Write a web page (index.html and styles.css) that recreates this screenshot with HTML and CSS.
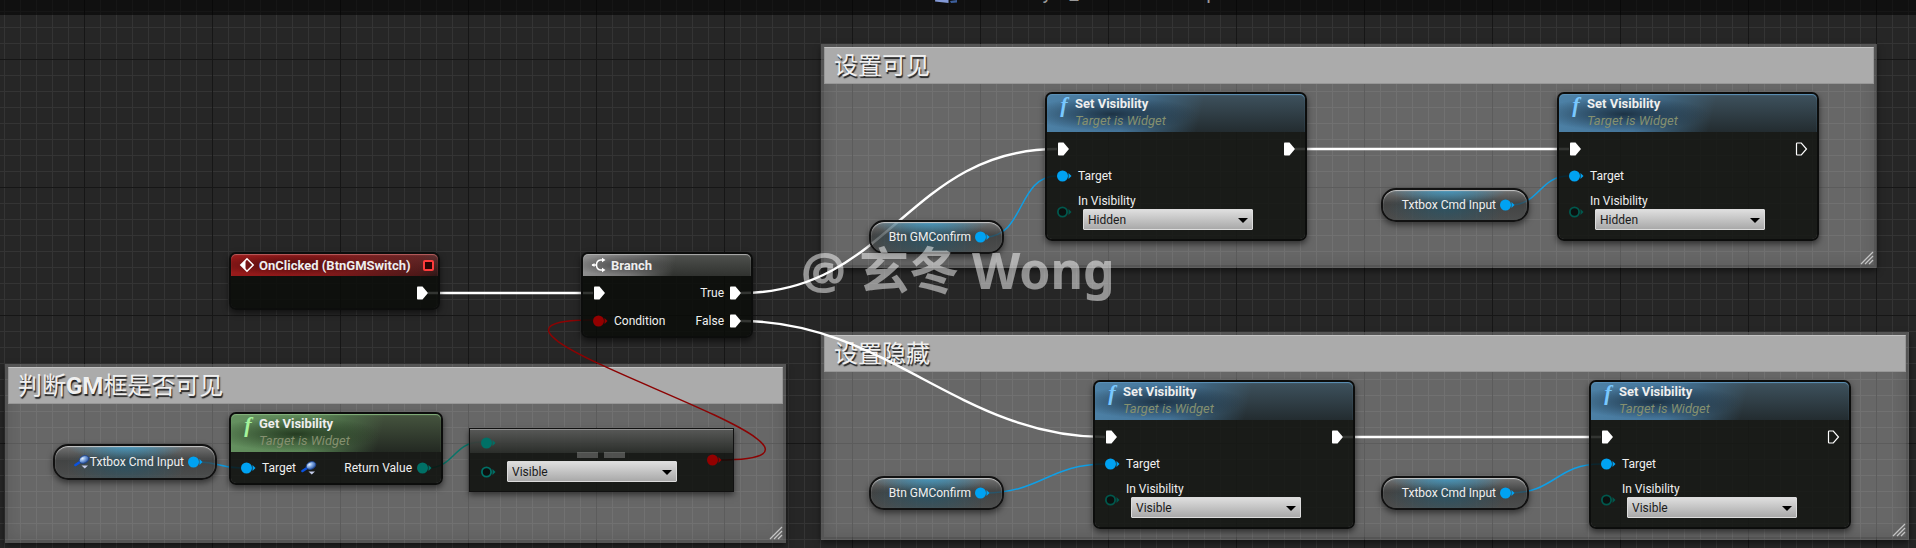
FILE: index.html
```html
<!DOCTYPE html>
<html lang="zh-CN">
<head>
<meta charset="utf-8">
<title>Event Graph</title>
<link rel="stylesheet" href="styles.css">
</head>
<body>
<svg class="defs" aria-hidden="true">
  <defs>
    <symbol id="exec" viewBox="0 0 14 16"><path d="M1 2.2Q1 1.5 1.8 1.5H6.5L12 8L6.500 14.500H1.800Q1 14.500 1 13.800Z" fill="#fff"/></symbol>
    <symbol id="exec-open" viewBox="0 0 14 16"><path d="M1.500 2.700Q1.500 2 2.200 2H6.300L11.500 8L6.300 14H2.200Q1.500 14 1.500 13.300Z" fill="none" stroke="#fff" stroke-width="1.200"/></symbol>
    <symbol id="pin" viewBox="0 0 16 12"><circle cx="5.500" cy="6" r="5.500" fill="currentColor"/><path d="M11.500 3L14.500 6L11.500 9Z" fill="currentColor"/></symbol>
    <symbol id="pin-open" viewBox="0 0 16 12"><circle cx="5.500" cy="6" r="4.600" fill="#0b100f" stroke="currentColor" stroke-width="1.800"/><path d="M11.500 3L14.500 6L11.500 9Z" fill="currentColor"/></symbol>
    <radialGradient id="lens" cx=".4" cy=".3" r=".8"><stop offset="0" stop-color="#e4f0ff"/><stop offset=".4" stop-color="#7ea6e0"/><stop offset="1" stop-color="#173f8c"/></radialGradient>
    <symbol id="search" viewBox="0 0 16 16"><path d="M1.500 11L6 8" stroke="#0a52e0" stroke-width="2.600" stroke-linecap="round"/><ellipse cx="10" cy="5.500" rx="5" ry="3.600" transform="rotate(-25 10 5.500)" fill="url(#lens)" stroke="#1c4391" stroke-width=".8"/><path d="M7.500 11.500H14L10.750 14.500Z" fill="#c3cbe8"/></symbol>
    <symbol id="grip" viewBox="0 0 14 14"><path d="M1 13L13 1M5 13L13 5M9 13L13 9" stroke="#c4c4c4" stroke-width="1.300"/></symbol>
  </defs>
</svg>

<main class="canvas">
  <header class="topbar">
    <svg class="crumb-icon" viewBox="0 0 24 12"><path d="M1 0H13.500V9L0 7.500Z" fill="#8399d6"/><path d="M15 7L22 6V8.500L16 9Z" fill="#3d5f9c"/></svg>
    <span class="crumb">MyM_G</span><span class="crumb crumb-sep">&gt;</span><span class="crumb">EventGraph</span>
  </header>

  <section class="comment comment-show">
    <h2 class="comment-title"><span>设置可见</span></h2>
    <svg class="grip"><use href="#grip"/></svg>
  </section>
  <section class="comment comment-hide">
    <h2 class="comment-title"><span>设置隐藏</span></h2>
    <svg class="grip"><use href="#grip"/></svg>
  </section>
  <section class="comment comment-check">
    <h2 class="comment-title"><span>判断<b>GM</b>框是否可见</span></h2>
    <svg class="grip"><use href="#grip"/></svg>
  </section>

  <svg class="wires" aria-hidden="true">
    <g class="wire-exec">
      <path d="M428 293H593"/>
      <path d="M741 293C889 293 909 149 1057 149"/>
      <path d="M741 321C886 321 960 437 1105 437"/>
      <path d="M1295 149H1569"/>
      <path d="M1343 437H1601"/>
    </g>
    <g class="wire-object">
      <path d="M985 237C1025 237 1017 176 1057 176"/>
      <path d="M985 493C1040 493 1050 464 1105 464"/>
      <path d="M1510 205C1540 205 1539 176 1569 176"/>
      <path d="M1510 493C1555 493 1556 464 1601 464"/>
      <path d="M198 462C220 462 219 468 241 468"/>
    </g>
    <path class="wire-enum" d="M427 468C455 468 453 442 481 442"/>
    <path class="wire-bool" d="M718 460C920 460 398 320 593 320"/>
  </svg>

  <article class="node node-clicked">
    <header class="node-head head-red">
      <svg class="icon" viewBox="0 0 16 16"><path d="M8 1.800L1.800 8L8 14.200L14.200 8Z" fill="none" stroke="#fff" stroke-width="1.500"/><path d="M6.500 3.500V12.500L2 8Z" fill="#fff"/></svg>
      <h3>OnClicked (BtnGMSwitch)</h3>
      <span class="delegate"></span>
    </header>
    <div class="node-body">
      <div class="row row-end"><svg class="exec"><use href="#exec"/></svg></div>
    </div>
  </article>

  <article class="node node-branch">
    <header class="node-head head-gray">
      <svg class="icon" viewBox="0 0 16 16"><path d="M1 8H5M12 3H9.500Q5.500 3.500 5.500 8Q5.500 12.500 9.500 13H12" fill="none" stroke="#fff" stroke-width="1.500"/><path d="M11 .8L14.500 3L11 5.200ZM11 10.800L14.500 13L11 15.200ZM3.500 6V10L.5 8Z" fill="#fff"/></svg>
      <h3>Branch</h3>
    </header>
    <div class="node-body">
      <div class="row"><svg class="exec"><use href="#exec"/></svg><span class="push">True</span><svg class="exec"><use href="#exec"/></svg></div>
      <div class="row"><svg class="pin c-bool"><use href="#pin"/></svg><span>Condition</span><span class="push">False</span><svg class="exec"><use href="#exec"/></svg></div>
    </div>
  </article>

  <article class="node node-get">
    <header class="node-head head-green tall">
      <i class="fn" aria-hidden="true">f</i>
      <div><h3>Get Visibility</h3><p>Target is Widget</p></div>
    </header>
    <div class="node-body">
      <div class="row"><svg class="pin c-object"><use href="#pin"/></svg><span>Target</span><svg class="icon"><use href="#search"/></svg><span class="push">Return Value</span><svg class="pin c-enum"><use href="#pin"/></svg></div>
    </div>
  </article>

  <article class="node-equal">
    <div class="equal-in">
      <svg class="pin c-enum"><use href="#pin"/></svg>
      <svg class="pin c-enum"><use href="#pin-open"/></svg>
      <span class="pick"><select aria-label="Compare value"><option>Visible</option></select></span>
    </div>
    <svg class="equal-sign" viewBox="0 0 48 6"><path d="M0 0H21V6H0ZM27 0H48V6H27Z" fill="#fff" fill-opacity=".24"/></svg>
    <svg class="pin c-bool"><use href="#pin"/></svg>
  </article>

  <article class="node node-set set-a">
    <header class="node-head head-blue tall"><i class="fn" aria-hidden="true">f</i><div><h3>Set Visibility</h3><p>Target is Widget</p></div></header>
    <div class="node-body">
      <div class="row"><svg class="exec"><use href="#exec"/></svg><svg class="exec push"><use href="#exec"/></svg></div>
      <div class="row"><svg class="pin c-object"><use href="#pin"/></svg><span>Target</span></div>
      <div class="param"><svg class="pin c-enum dim"><use href="#pin-open"/></svg><label for="vis-a">In Visibility</label><span class="pick"><select id="vis-a"><option>Hidden</option><option>Visible</option></select></span></div>
    </div>
  </article>
  <article class="node node-set set-b">
    <header class="node-head head-blue tall"><i class="fn" aria-hidden="true">f</i><div><h3>Set Visibility</h3><p>Target is Widget</p></div></header>
    <div class="node-body">
      <div class="row"><svg class="exec"><use href="#exec"/></svg><svg class="exec push"><use href="#exec-open"/></svg></div>
      <div class="row"><svg class="pin c-object"><use href="#pin"/></svg><span>Target</span></div>
      <div class="param"><svg class="pin c-enum dim"><use href="#pin-open"/></svg><label for="vis-b">In Visibility</label><span class="pick"><select id="vis-b"><option>Hidden</option><option>Visible</option></select></span></div>
    </div>
  </article>
  <article class="node node-set set-c">
    <header class="node-head head-blue tall"><i class="fn" aria-hidden="true">f</i><div><h3>Set Visibility</h3><p>Target is Widget</p></div></header>
    <div class="node-body">
      <div class="row"><svg class="exec"><use href="#exec"/></svg><svg class="exec push"><use href="#exec"/></svg></div>
      <div class="row"><svg class="pin c-object"><use href="#pin"/></svg><span>Target</span></div>
      <div class="param"><svg class="pin c-enum dim"><use href="#pin-open"/></svg><label for="vis-c">In Visibility</label><span class="pick"><select id="vis-c"><option>Visible</option><option>Hidden</option></select></span></div>
    </div>
  </article>
  <article class="node node-set set-d">
    <header class="node-head head-blue tall"><i class="fn" aria-hidden="true">f</i><div><h3>Set Visibility</h3><p>Target is Widget</p></div></header>
    <div class="node-body">
      <div class="row"><svg class="exec"><use href="#exec"/></svg><svg class="exec push"><use href="#exec-open"/></svg></div>
      <div class="row"><svg class="pin c-object"><use href="#pin"/></svg><span>Target</span></div>
      <div class="param"><svg class="pin c-enum dim"><use href="#pin-open"/></svg><label for="vis-d">In Visibility</label><span class="pick"><select id="vis-d"><option>Visible</option><option>Hidden</option></select></span></div>
    </div>
  </article>

  <div class="pill pill-btn-top"><span>Btn GMConfirm</span><svg class="pin c-object"><use href="#pin"/></svg></div>
  <div class="pill pill-btn-low"><span>Btn GMConfirm</span><svg class="pin c-object"><use href="#pin"/></svg></div>
  <div class="pill pill-txt-top"><span>Txtbox Cmd Input</span><svg class="pin c-object"><use href="#pin"/></svg></div>
  <div class="pill pill-txt-low"><span>Txtbox Cmd Input</span><svg class="pin c-object"><use href="#pin"/></svg></div>
  <div class="pill pill-txt-left"><svg class="icon"><use href="#search"/></svg><span>Txtbox Cmd Input</span><svg class="pin c-object"><use href="#pin"/></svg></div>

  <div class="watermark">@ 玄冬 Wong</div>
</main>
</body>
</html>
```
FILE: styles.css
```css
* { box-sizing: border-box; }

body {
  margin: 0;
  font: 12px/16px Roboto, "Noto Sans CJK SC", sans-serif;
  color: #f0f0f0;
  background: #262626;
}

h2, h3, p { margin: 0; }
svg { display: block; flex: none; overflow: visible; }
.defs { position: absolute; width: 0; height: 0; }

/* graph surface: 16px cells, a darker line every 8 cells */
.canvas {
  position: relative;
  min-height: 100vh;
  overflow: hidden;
  background-color: #262626;
  background-image:
    linear-gradient(90deg, #161616 1px, transparent 1px),
    linear-gradient(#161616 1px, transparent 1px),
    linear-gradient(90deg, #343434 1px, transparent 1px),
    linear-gradient(#343434 1px, transparent 1px);
  background-size: 128px 128px, 128px 128px, 16px 16px, 16px 16px;
  background-position: 84px 59px, 84px 59px, 4px 11px, 4px 11px;
}

.topbar {
  display: flex;
  gap: 12px;
  height: 15px;
  padding-left: 935px;
  overflow: hidden;
  background: rgba(0, 0, 0, .56);
}
.crumb-icon { width: 24px; height: 12px; margin: -6px 54px 0 0; }
.crumb { margin-top: -18px; font-size: 20px; line-height: 20px; color: #999; }
.crumb-sep { color: #fff; }

/* comment boxes */
.comment {
  position: absolute;
  border: 3px solid rgba(255, 255, 255, .22);
  background: rgba(255, 255, 255, .3);
  background-clip: padding-box;
  box-shadow: 0 3px 6px rgba(0, 0, 0, .5), inset 0 0 16px rgba(0, 0, 0, .12);
}
.comment-show { left: 821px; top: 44px; width: 1056px; height: 224px; }
.comment-hide { left: 821px; top: 332px; width: 1088px; height: 208px; }
.comment-check { left: 5px; top: 364px; width: 781px; height: 179px; }
.comment-title {
  height: 37px;
  padding-left: 9px;
  border: 1px solid #979797;
  border-top-color: #c4c4c4;
  font-size: 24px;
  line-height: 37px;
  font-weight: 400;
  color: #f0f0f0;
  background: #ababab;
  text-shadow: 1px 2px 1px #222;
}
.grip { position: absolute; right: 0; bottom: 0; width: 14px; height: 14px; }

.wires { position: absolute; inset: 0; width: 100%; height: 100%; fill: none; }
.wire-exec { stroke: #fff; stroke-width: 2.4; }
.wire-object { stroke: #0f9fe6; stroke-width: 1.5; }
.wire-enum { stroke: #087468; stroke-width: 1.5; }
.wire-bool { stroke: #8c0303; stroke-width: 1.5; }

/* nodes */
.node {
  position: absolute;
  border: 2px solid #0c0d0c;
  border-radius: 7px;
  background: rgba(10, 12, 9, .83);
  background-clip: padding-box;
  box-shadow: 0 3px 6px rgba(0, 0, 0, .55);
}
.node-clicked { left: 229px; top: 252px; width: 211px; }
.node-branch { left: 581px; top: 252px; width: 172px; }
.node-get { left: 229px; top: 412px; width: 214px; }
.node-set { width: 262px; }
.set-a { left: 1045px; top: 92px; }
.set-b { left: 1557px; top: 92px; }
.set-c { left: 1093px; top: 380px; }
.set-d { left: 1589px; top: 380px; }

.node-head {
  display: flex;
  align-items: center;
  gap: 4px;
  height: 22px;
  padding: 0 4px 0 8px;
  border-radius: 5px 5px 0 0;
}
.node-head.tall { align-items: flex-start; height: 38px; padding: 1px 10px; }
.node-head h3 { font-size: 13px; line-height: 17px; font-weight: 700; color: #eee; }
.node-head p { font-size: 13px; line-height: 17px; font-style: italic; color: #85906f; }
.icon { width: 16px; height: 16px; }
.fn {
  width: 14px;
  font: italic 700 22px/20px "Liberation Serif", serif;
  text-align: center;
}

.head-red {
  background:
    radial-gradient(ellipse 90px 10px at 60px 11px, rgba(60, 8, 8, .75), transparent),
    linear-gradient(95deg, #981a1a 0, #86191a 90px, rgba(120, 24, 24, .4) 190px, transparent),
    linear-gradient(#5e3434, #2c1616);
  box-shadow: inset 0 1px 1px #b86060;
}
.head-gray {
  background:
    radial-gradient(ellipse 55px 10px at 40px 11px, rgba(50, 50, 50, .65), transparent),
    linear-gradient(100deg, #909090 0, #747474 50px, transparent 92px),
    linear-gradient(#50524f, #30322f);
  box-shadow: inset 0 1px 1px #b0b0b0;
}
.head-green {
  background:
    radial-gradient(ellipse 85px 17px at 65px 20px, rgba(32, 52, 28, .9), transparent),
    linear-gradient(104deg, #659160 0, #5a8455 80px, rgba(80, 120, 76, .6) 115px, transparent 150px),
    linear-gradient(#46553f, #232922);
  box-shadow: inset 0 1px 1px #86b47e;
}
.head-green .fn { color: #a4f49c; }
.head-blue {
  background:
    radial-gradient(ellipse 85px 17px at 65px 20px, rgba(25, 44, 60, .9), transparent),
    linear-gradient(104deg, #4d81a6 0, #447499 80px, rgba(62, 106, 138, .6) 115px, transparent 154px),
    linear-gradient(#3e525e, #232c30);
  box-shadow: inset 0 1px 1px #5c93ba;
}
.head-blue .fn { color: #79c8ff; }

.delegate {
  width: 11px;
  height: 11px;
  margin-left: auto;
  border: 2px solid #ff3b3b;
  border-radius: 2px;
  background: #2a0404;
}

.node-body {
  display: flex;
  flex-direction: column;
  gap: 6px;
  padding: 6px 8px 4px 10px;
}
.row { display: flex; align-items: center; gap: 5px; height: 22px; }
.row-end { justify-content: flex-end; }
.push { margin-left: auto; }
.exec { width: 14px; height: 16px; }
.pin { width: 16px; height: 12px; }
.c-object { color: #00a2f2; }
.c-enum { color: #007066; }
.c-bool { color: #930000; }
.dim { color: #00584d; }

.node-get .node-body { padding-top: 5px; }
.node-set .node-body { gap: 5px; }
.param {
  display: grid;
  grid-template-columns: 16px auto;
  justify-content: start;
  align-items: center;
  column-gap: 5px;
  padding: 1px 0 5px;
}
.param .pin { grid-row: 1 / 3; }
.param .pick { margin-left: 5px; }

.pick { position: relative; display: block; width: 170px; height: 21px; }
.pick select {
  display: block;
  width: 100%;
  height: 100%;
  padding: 0 4px;
  border: 1px solid #dcdcdc;
  border-radius: 1px;
  appearance: none;
  font: 12px/16px Roboto, sans-serif;
  color: #1a1a1a;
  background: linear-gradient(#dedede, #a9a9a9);
}
.pick::after {
  content: "";
  position: absolute;
  right: 5px;
  top: 9px;
  border: 5px solid transparent;
  border-top-color: #000;
  border-bottom: 0;
  pointer-events: none;
}

.node-equal {
  position: absolute;
  left: 469px;
  top: 428px;
  width: 265px;
  height: 64px;
  display: flex;
  align-items: center;
  justify-content: space-between;
  padding: 0 10px 0 11px;
  border: 1px solid #111;
  background:
    linear-gradient(rgba(150, 150, 150, .5), rgba(60, 64, 60, .5)) top / 100% 24px no-repeat,
    rgba(10, 12, 9, .83);
  box-shadow: 0 3px 6px rgba(0, 0, 0, .5), inset 0 1px 0 #8e8e8e;
}
.equal-in {
  display: grid;
  grid-template-columns: 16px 170px;
  grid-template-rows: 16px 21px;
  align-items: center;
  gap: 10px;
  padding-bottom: 3px;
}
.equal-in .pin:first-child { grid-column: 1 / 3; }
.equal-sign { position: absolute; left: 107px; top: 23px; width: 48px; height: 6px; }

/* variable getters */
.pill {
  position: absolute;
  display: flex;
  align-items: center;
  justify-content: flex-end;
  gap: 4px;
  height: 34px;
  padding-right: 11px;
  border: 2px solid #121212;
  border-radius: 15px;
  background:
    radial-gradient(ellipse 60px 14px at 45% 0, rgba(60, 165, 215, .75), transparent),
    radial-gradient(ellipse 60px 22px at 45% 60%, rgba(30, 90, 115, .6), transparent),
    linear-gradient(rgba(120, 120, 120, .7), rgba(50, 52, 52, .7) 45%, rgba(64, 66, 66, .7));
  background-clip: padding-box;
  box-shadow: 0 3px 6px rgba(0, 0, 0, .5), inset 0 1px 1px #c8c8c8;
}
.pill-btn-top { left: 869px; top: 220px; width: 135px; }
.pill-btn-low { left: 869px; top: 476px; width: 135px; }
.pill-txt-top { left: 1381px; top: 188px; width: 148px; }
.pill-txt-low { left: 1381px; top: 476px; width: 148px; }
.pill-txt-left { left: 53px; top: 444px; width: 164px; height: 36px; }
.pill-txt-left .icon { margin-right: -4px; }

.watermark {
  position: absolute;
  left: 801px;
  top: 238px;
  font: 700 50px/64px "Noto Sans", "Noto Sans CJK SC", sans-serif;
  white-space: nowrap;
  color: rgba(255, 255, 255, .5);
}
```
